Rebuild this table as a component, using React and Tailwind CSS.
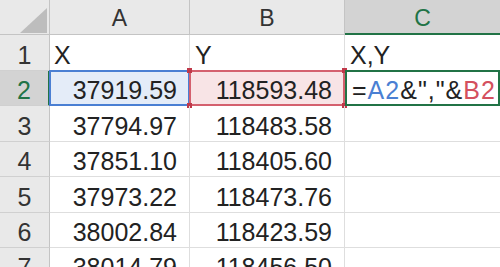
import React from "react";

const rows = [
  { n: 1, h: "h-[36px]", a: "X", b: "Y", c: "X,Y", text: true },
  { n: 2, h: "h-[35px]", a: "37919.59", b: "118593.48", sel: true },
  { n: 3, h: "h-[36px]", a: "37794.97", b: "118483.58" },
  { n: 4, h: "h-[35px]", a: "37851.10", b: "118405.60" },
  { n: 5, h: "h-[36px]", a: "37973.22", b: "118473.76" },
  { n: 6, h: "h-[35px]", a: "38002.84", b: "118423.59" },
  { n: 7, h: "h-[35px]", a: "38014.79", b: "118456.50" },
];

function Handle({ pos, color }) {
  return <div className={`absolute w-[5px] h-[5px] ${pos} ${color}`} />;
}

export default function App() {
  return (
    <div
      className="w-[500px] h-[267px] overflow-hidden bg-white text-[#222]"
      style={{ fontFamily: '"Liberation Sans", Arial, sans-serif' }}
    >
      {/* header row */}
      <div className="flex h-[35px]">
        <div className="w-[50px] shrink-0 bg-[#e9e9e9] border-r border-b border-[#c4c4c4] relative">
          <svg className="absolute inset-0" width="50" height="35">
            <polygon points="47,8 47,33 20,33" fill="#bdbdbd" />
          </svg>
        </div>
        <div className="w-[140px] shrink-0 bg-[#e9e9e9] border-r border-b border-[#c4c4c4] flex items-end justify-center pb-[2px] text-[23px] leading-[28px] text-[#333]">
          A
        </div>
        <div className="w-[155px] shrink-0 bg-[#e9e9e9] border-r border-b border-[#c4c4c4] flex items-end justify-center pb-[2px] text-[23px] leading-[28px] text-[#333]">
          B
        </div>
        <div className="flex-1 bg-[#d3d3d3] border-b-2 border-[#217346] flex items-end justify-center pb-[1px] text-[23px] leading-[28px] text-[#217346]">
          C
        </div>
      </div>

      {rows.map((r) => (
        <div key={r.n} className={`flex ${r.h}`}>
          <div
            className={`w-[50px] shrink-0 border-b border-[#d0d0d0] flex items-end justify-center pb-[1px] text-[25px] leading-[28px] ${
              r.sel
                ? "bg-[#d3d3d3] text-[#217346] border-r-2 border-r-[#217346]"
                : "bg-[#e9e9e9] text-[#333] border-r border-r-[#c4c4c4]"
            }`}
          >
            {r.n}
          </div>

          {/* A */}
          <div
            className={`w-[140px] shrink-0 relative border-r border-b border-[#dedede] flex items-end pb-[1px] text-[25px] leading-[28px] ${
              r.text ? "justify-start pl-[4px]" : "justify-end pr-[12px]"
            } ${r.sel ? "bg-[#e4ecf8]" : ""}`}
          >
            {r.sel && (
              <div className="absolute -top-[1px] -left-[1px] -right-[1px] -bottom-[1px] border-2 border-[#4a7fd3]" />
            )}
            <span className="relative">{r.a}</span>
          </div>

          {/* B */}
          <div
            className={`w-[155px] shrink-0 relative border-r border-b border-[#dedede] flex items-end pb-[1px] text-[25px] leading-[28px] ${
              r.text ? "justify-start pl-[5px]" : "justify-end pr-[12px]"
            } ${r.sel ? "bg-[#f8e4e6]" : ""}`}
          >
            {r.sel && (
              <>
                <div className="absolute -top-[1px] -left-[1px] -right-[1px] -bottom-[1px] border-2 border-[#d4606e]" />
                <Handle pos="-top-[3px] -left-[3px]" color="bg-[#c0394a]" />
                <Handle pos="-top-[3px] -right-[3px]" color="bg-[#c0394a]" />
                <Handle pos="-bottom-[3px] -left-[3px]" color="bg-[#c0394a]" />
                <Handle pos="-bottom-[3px] -right-[3px]" color="bg-[#c0394a]" />
              </>
            )}
            <span className="relative">{r.b}</span>
          </div>

          {/* C */}
          <div className="flex-1 relative border-b border-[#dedede] flex items-end justify-start pl-[5px] pb-[1px] text-[25px] leading-[28px] whitespace-nowrap">
            {r.sel && (
              <div className="absolute -top-[1px] left-0 right-0 -bottom-[1px] border-2 border-[#217346]" />
            )}
            {r.c && <span className="relative">{r.c}</span>}
            {r.sel && (
              <span className="relative pl-[2px] tracking-[1px]">
                =<span className="text-[#4a7fd3]">A2</span>&amp;","&amp;
                <span className="text-[#d4505e]">B2</span>
              </span>
            )}
          </div>
        </div>
      ))}
    </div>
  );
}
